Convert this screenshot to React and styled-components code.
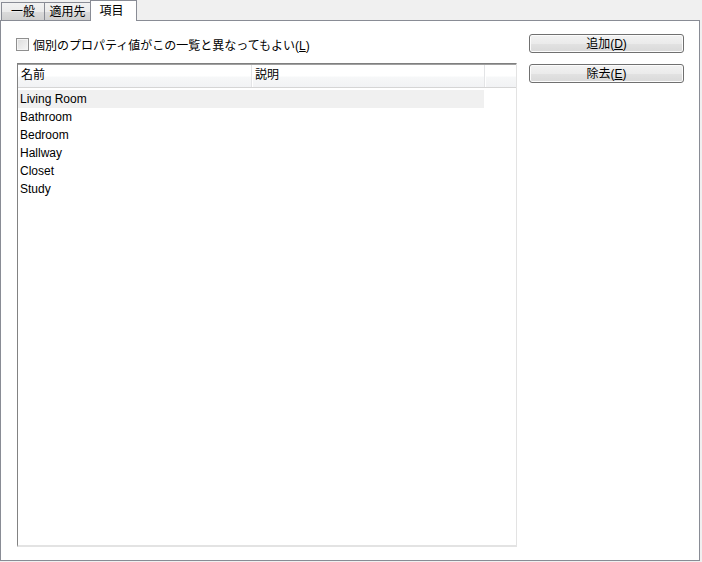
import React from "react";
import styled, { createGlobalStyle } from "styled-components";

const GlobalStyle = createGlobalStyle`
	html, body {
		margin: 0;
		padding: 0;
		background: #f0f0f0;
	}
	body {
		font-family: "Liberation Sans", "Noto Sans CJK JP", sans-serif;
		font-size: 12px;
		color: #000;
	}
`;

const tabs = [
	{ label: "一般", w: 43 },
	{ label: "適用先", w: 47 },
	{ label: "項目", w: 47 },
];
const items = ["Living Room", "Bathroom", "Bedroom", "Hallway", "Closet", "Study"];

const App = () => {
	return (
		<Window>
			<GlobalStyle />
			<TabStrip>
				{tabs.map((t, i) => (
					<Tab key={t.label} $w={t.w} $active={i === 2}>
						{t.label}
					</Tab>
				))}
			</TabStrip>
			<Panel>
				<Left>
					<CheckRow>
						<Check />
						<span>
							個別のプロパティ値がこの一覧と異なってもよい(<u>L</u>)
						</span>
					</CheckRow>
					<ListBox>
						<Header>
							<HeadCell $w={234}>名前</HeadCell>
							<HeadCell $w={233}>説明</HeadCell>
							<HeadCell $fill />
						</Header>
						<Rows>
							{items.map((it, i) => (
								<Row key={it} $selected={i === 0}>
									{it}
								</Row>
							))}
						</Rows>
					</ListBox>
				</Left>
				<Buttons>
					<Button>
						追加(<u>D</u>)
					</Button>
					<Button>
						除去(<u>E</u>)
					</Button>
				</Buttons>
			</Panel>
		</Window>
	);
};

const Window = styled.div`
	width: 702px;
	height: 562px;
	display: flex;
	flex-direction: column;
	background: #f0f0f0;
`;
const TabStrip = styled.div`
	display: flex;
	height: 20px;
	padding-left: 1px;
	position: relative;
	z-index: 1;
`;
const Tab = styled.div`
	box-sizing: border-box;
	width: ${(p) => p.$w}px;
	height: ${(p) => (p.$active ? "21px" : "19px")};
	margin-top: ${(p) => (p.$active ? "0" : "2px")};
	margin-left: ${(p) => (p.$active ? "-1px" : "0")};
	padding-top: ${(p) => (p.$active ? "2px" : "1px")};
	padding-right: ${(p) => (p.$active ? "4px" : "0")};
	text-align: center;
	white-space: nowrap;
	border: 1px solid #898c95;
	border-bottom: ${(p) => (p.$active ? "none" : "1px solid #898c95")};
	border-right: none;
	background: ${(p) =>
		p.$active ? "#fff" : "linear-gradient(#f2f2f2, #ebebeb 50%, #dbdbdb 51%, #cfcfcf)"};
	line-height: 16px;
	&:nth-child(2),
	&:last-child {
		border-right: 1px solid #898c95;
	}
`;
const Panel = styled.div`
	box-sizing: border-box;
	width: 700px;
	height: 541px;
	background: #fff;
	border: 1px solid #898c95;
	display: flex;
	padding: 13px 16px 0 16px;
	gap: 12px;
`;
const Left = styled.div`
	display: flex;
	flex-direction: column;
	width: 500px;
`;
const CheckRow = styled.label`
	display: flex;
	align-items: center;
	gap: 4px;
	height: 21px;
	margin-left: -1px;
	u {
		text-decoration: underline;
	}
`;
const Check = styled.span`
	box-sizing: border-box;
	width: 13px;
	height: 13px;
	border: 1px solid #8f8f8f;
	background: linear-gradient(135deg, #dcdcdc, #f6f6f6);
	box-shadow: inset 0 0 0 1px #f4f4f4;
`;
const ListBox = styled.div`
	box-sizing: border-box;
	margin-top: 8px;
	width: 500px;
	height: 484px;
	border-top: 1px solid #7f7f7f;
	border-left: 1px solid #828282;
	border-right: 1px solid #e3e3e3;
	border-bottom: 2px solid #e3e3e3;
	display: flex;
	flex-direction: column;
`;
const Header = styled.div`
	display: flex;
	height: 22px;
	border-top: 1px solid #a0a0a0;
	border-bottom: 1px solid #d5d5d5;
	background: linear-gradient(#ffffff, #ffffff 50%, #f6f7f8 55%, #f1f2f4);
`;
const HeadCell = styled.div`
	box-sizing: border-box;
	width: ${(p) => (p.$w ? `${p.$w}px` : "auto")};
	flex: ${(p) => (p.$fill ? "1" : "none")};
	padding: 3px 3px 0 3px;
	border-right: ${(p) => (p.$fill ? "none" : "1px solid #e3e4e6")};
	box-shadow: ${(p) => (p.$fill ? "none" : "1px 0 0 #fff")};
	line-height: 14px;
`;
const Rows = styled.div`
	padding-top: 2px;
	display: flex;
	flex-direction: column;
`;
const Row = styled.div`
	width: 466px;
	height: 18px;
	line-height: 18px;
	padding-left: 2px;
	box-sizing: border-box;
	background: ${(p) => (p.$selected ? "#f0f0f0" : "transparent")};
`;
const Buttons = styled.div`
	display: flex;
	flex-direction: column;
	gap: 11px;
	padding-top: 0;
`;
const Button = styled.div`
	box-sizing: border-box;
	width: 155px;
	height: 19px;
	border: 1px solid #707070;
	border-radius: 3px;
	background: linear-gradient(#f2f2f2, #ebebeb 50%, #e2e2e2 51%, #d9d9d9);
	box-shadow: inset 0 0 0 1px #fcfcfc;
	display: flex;
	align-items: center;
	justify-content: center;
	line-height: 16px;
	u {
		text-decoration: underline;
	}
`;

export default App;
